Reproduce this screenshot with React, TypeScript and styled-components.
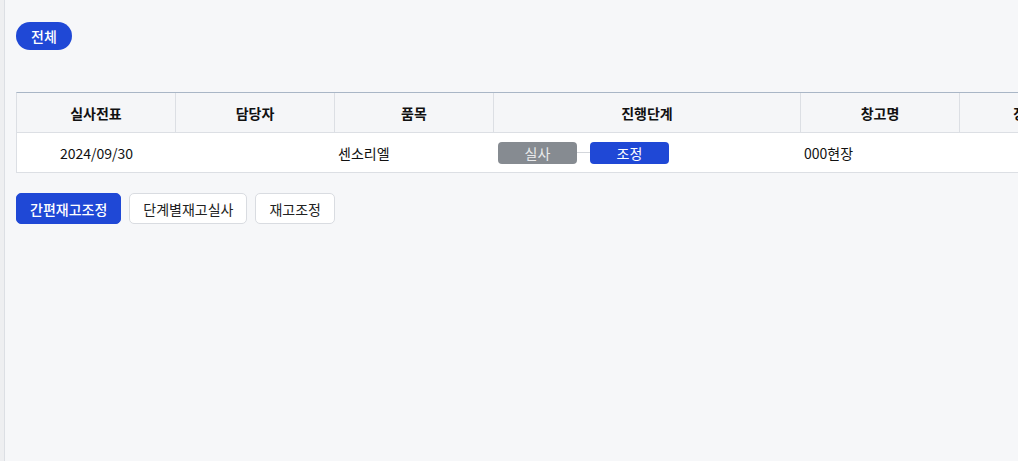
import React from "react";
import styled, { createGlobalStyle } from "styled-components";

const Global = createGlobalStyle`
  html, body { margin: 0; padding: 0; height: 100%; }
  body {
    font-family: "Noto Sans CJK KR", "Noto Sans", sans-serif;
    font-size: 14px;
    color: #111;
    background: #f6f7f9;
    overflow: hidden;
  }
  #root { height: 100%; }
`;

const Shell = styled.div`
  display: flex;
  height: 100vh;
`;

const Rail = styled.div`
  width: 4px;
  flex: none;
  background: #eeeff1;
  border-right: 1px solid #dcdfe4;
`;

const Main = styled.main`
  flex: 1;
  min-width: 0;
  overflow: hidden;
  padding: 22px 0 0 11px;
  display: flex;
  flex-direction: column;
  align-items: flex-start;
`;

const Pill = styled.button`
  height: 28px;
  width: 56px;
  border: none;
  border-radius: 14px;
  background: #1f48d6;
  color: #fff;
  font: inherit;
  font-size: 14px;
  font-weight: 500;
  padding: 0;
  line-height: 28px;
`;

const Table = styled.div`
  margin-top: 42px;
  width: max-content;
`;

const cols = "159px 159px 159px 307px 159px 159px";

const HeadRow = styled.div`
  display: grid;
  grid-template-columns: ${cols};
  border-top: 1px solid #a9b6c6;
  border-bottom: 1px solid #dcdfe4;
  border-left: 1px solid #dcdfe4;
  background: #f5f6f8;
`;

const HeadCell = styled.div`
  height: 39px;
  box-sizing: border-box;
  border-right: 1px solid #dcdfe4;
  display: flex;
  align-items: center;
  justify-content: center;
  font-weight: 700;
  font-size: 14px;
  color: #111;
`;

const BodyRow = styled.div`
  display: grid;
  grid-template-columns: ${cols};
  border-bottom: 1px solid #dcdfe4;
  border-left: 1px solid #dcdfe4;
  background: #fff;
`;

const Cell = styled.div<{ $align?: "left" | "center"; $pad?: number }>`
  height: 39px;
  box-sizing: border-box;
  display: flex;
  align-items: center;
  justify-content: ${(p) => (p.$align === "center" ? "center" : "flex-start")};
  padding-left: ${(p) => (p.$align === "center" ? 0 : p.$pad ?? 3)}px;
  font-size: 14px;
  color: #111;
`;

const Steps = styled.div`
  display: flex;
  align-items: center;
`;

const Step = styled.span<{ $active?: boolean }>`
  width: 79px;
  height: 22px;
  border-radius: 4px;
  background: ${(p) => (p.$active ? "#1f48d6" : "#868b91")};
  color: ${(p) => (p.$active ? "#fff" : "#e9eaec")};
  display: flex;
  align-items: center;
  justify-content: center;
  font-size: 14px;
`;

const Connector = styled.span`
  width: 13px;
  height: 1px;
  background: #d3d6db;
`;

const Actions = styled.div`
  margin-top: 20px;
  display: flex;
  gap: 8px;
`;

const Btn = styled.button<{ $primary?: boolean }>`
  height: 31px;
  box-sizing: border-box;
  padding: 0 13px;
  border-radius: 5px;
  font: inherit;
  font-size: 14px;
  border: 1px solid ${(p) => (p.$primary ? "#1f48d6" : "#d9dce1")};
  background: ${(p) => (p.$primary ? "#1f48d6" : "#fff")};
  color: ${(p) => (p.$primary ? "#fff" : "#222")};
  font-weight: ${(p) => (p.$primary ? 500 : 400)};
`;

const headers = ["실사전표", "담당자", "품목", "진행단계", "창고명", "장부수량"];

export default function App() {
  return (
    <>
      <Global />
      <Shell>
        <Rail />
        <Main>
          <Pill>전체</Pill>
          <Table>
            <HeadRow>
              {headers.map((h) => (
                <HeadCell key={h}>{h}</HeadCell>
              ))}
            </HeadRow>
            <BodyRow>
              <Cell $align="center">2024/09/30</Cell>
              <Cell />
              <Cell>센소리엘</Cell>
              <Cell $pad={4}>
                <Steps>
                  <Step>실사</Step>
                  <Connector />
                  <Step $active>조정</Step>
                </Steps>
              </Cell>
              <Cell>000현장</Cell>
              <Cell />
            </BodyRow>
          </Table>
          <Actions>
            <Btn $primary>간편재고조정</Btn>
            <Btn>단계별재고실사</Btn>
            <Btn>재고조정</Btn>
          </Actions>
        </Main>
      </Shell>
    </>
  );
}
